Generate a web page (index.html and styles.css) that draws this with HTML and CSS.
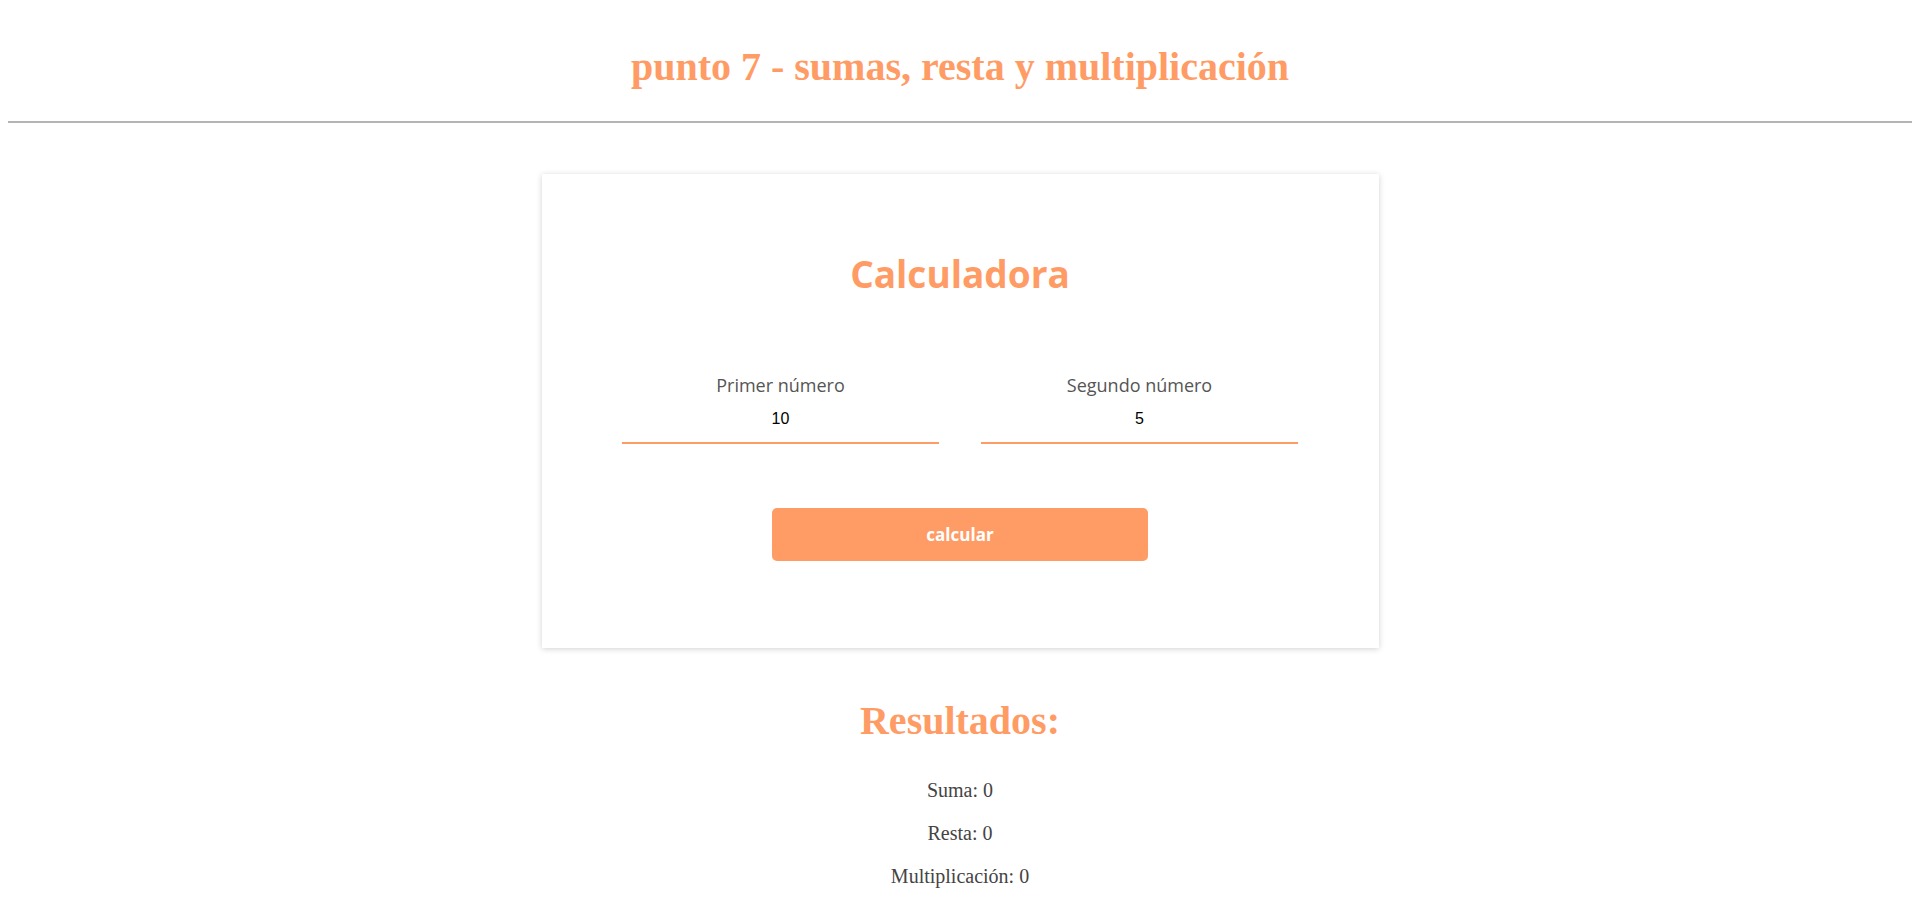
FILE: index.html
```html
<!DOCTYPE html>
<html lang="es">
<head>
<meta charset="utf-8">
<title>punto 7</title>
<link rel="stylesheet" href="styles.css">
</head>
<body>
<h1 class="page-title">punto 7 - sumas, resta y multiplicación</h1>
<hr class="divider">
<main class="wrap">
  <section class="card">
    <h2 class="card-title">Calculadora</h2>
    <div class="fields">
      <label class="field">
        <span class="field-label">Primer número</span>
        <input class="field-input" type="text" value="10">
      </label>
      <label class="field">
        <span class="field-label">Segundo número</span>
        <input class="field-input" type="text" value="5">
      </label>
    </div>
    <button class="btn" type="button">calcular</button>
  </section>
  <section class="results">
    <h2 class="results-title">Resultados:</h2>
    <p class="result">Suma: 0</p>
    <p class="result">Resta: 0</p>
    <p class="result">Multiplicación: 0</p>
  </section>
</main>
</body>
</html>
```
FILE: styles.css
```css
body {
  margin: 8px;
  font-family: "Liberation Serif", "Times New Roman", serif;
  background: #fff;
}
.page-title {
  margin: 0;
  padding-top: 36px;
  padding-bottom: 31px;
  text-align: center;
  color: #ff9c66;
  font-size: 40px;
  font-weight: bold;
  line-height: 46px;
}
.divider {
  margin: 0;
  border: none;
  border-top: 2px solid #b4b4b4;
}
.wrap {
  display: flex;
  flex-direction: column;
  align-items: center;
  padding-top: 51px;
}
.card {
  box-sizing: border-box;
  width: 837px;
  height: 474px;
  background: #fff;
  box-shadow: 0 1px 6px rgba(0,0,0,0.18);
  display: flex;
  flex-direction: column;
  align-items: center;
  padding-top: 76px;
}
.card-title {
  margin: 0;
  font-family: "Open Sans", "Noto Sans", sans-serif;
  font-weight: bold;
  color: #ff9c66;
  font-size: 37px;
  line-height: 48px;
}
.fields {
  display: flex;
  gap: 42px;
  margin-top: 75px;
}
.field {
  display: flex;
  flex-direction: column;
  align-items: center;
  width: 317px;
}
.field-label {
  font-family: "Open Sans", "Noto Sans", sans-serif;
  color: #555;
  font-size: 18px;
  line-height: 24px;
}
.field-input {
  box-sizing: border-box;
  width: 317px;
  border: none;
  border-bottom: 2px solid #ff9c66;
  outline: none;
  text-align: center;
  font-family: "Liberation Sans", Arial, sans-serif;
  font-size: 16px;
  color: #000;
  padding: 13px 0 14px;
  background: transparent;
}
.btn {
  margin-top: 64px;
  width: 376px;
  height: 53px;
  border: none;
  border-radius: 5px;
  background: #ff9c66;
  color: #fff;
  font-family: "Open Sans", "Noto Sans", sans-serif;
  font-weight: bold;
  font-size: 17px;
}
.results {
  display: flex;
  flex-direction: column;
  align-items: center;
  padding-top: 50px;
}
.results-title {
  margin: 0 0 35px;
  color: #ff9c66;
  font-size: 40px;
  line-height: 46px;
}
.result {
  margin: 0 0 20px;
  color: #444;
  font-size: 20px;
  line-height: 23px;
}
```
